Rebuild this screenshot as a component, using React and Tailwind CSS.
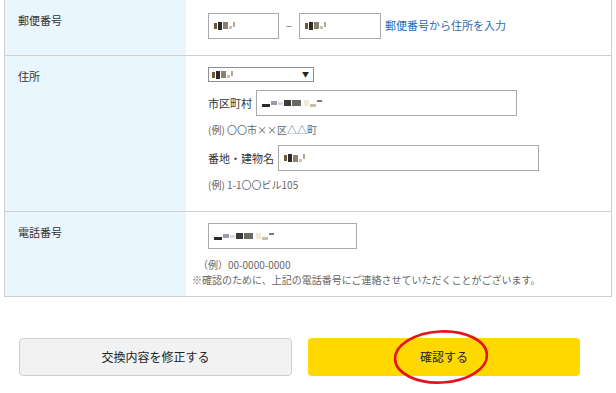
import React from "react";

const FONT = { fontFamily: '"Noto Sans CJK JP", "Noto Sans", sans-serif' };

function Mosaic({ blocks }) {
  return (
    <span className="flex items-center gap-[1px] blur-[0.4px]">
      {blocks.map((b, i) => (
        <span key={i} className={b} />
      ))}
    </span>
  );
}

const SHORT = [
  "h-[6px] w-[3px] bg-[#6b5a3a]",
  "h-[8px] w-[4px] bg-[#2f2a24]",
  "h-[7px] w-[5px] bg-[#8a8070]",
  "h-[3px] w-[3px] bg-[#c8c0b0] mt-[4px]",
  "h-[5px] w-[2px] bg-[#b0a890] mb-[3px]",
];

const LONG = [
  "h-[3px] w-[8px] bg-[#2a2a2a] mt-[5px]",
  "h-[4px] w-[6px] bg-[#9a9aa8]",
  "h-[3px] w-[5px] bg-[#d8d8ea]",
  "h-[6px] w-[7px] bg-[#3a3a3a]",
  "h-[6px] w-[9px] bg-[#6a6a60]",
  "h-[6px] w-[5px] bg-[#f0ead8] ml-[2px]",
  "h-[3px] w-[6px] bg-[#c8c0a8] mt-[4px]",
  "h-[2px] w-[5px] bg-[#7a7a7a] mb-[5px]",
];

function Field({ className, blocks }) {
  return (
    <div className={`flex items-center border border-[#a9a9a9] bg-white px-[5px] ${className}`}>
      <Mosaic blocks={blocks} />
    </div>
  );
}

export default function App() {
  return (
    <div className="h-[393px] w-[616px] bg-white text-[#333]" style={FONT}>
      <div className="mx-[4px] w-[608px] border-x border-[#cfcfcf]">
        {/* 郵便番号 */}
        <div className="grid grid-cols-[181px_1fr] border-b border-[#cfcfcf]">
          <div className="bg-[#eaf6fe] px-[13px] pt-[12px] text-[11px] leading-[16px]">郵便番号</div>
          <div className="flex h-[55px] items-center pb-[4px] pl-[22px] text-[11px]">
            <Field className="h-[26px] w-[71px]" blocks={SHORT} />
            <span className="mx-[7px] text-[#666]">–</span>
            <Field className="h-[26px] w-[82px]" blocks={SHORT} />
            <a className="ml-[4px] text-[11px] text-[#2a6bb5]">郵便番号から住所を入力</a>
          </div>
        </div>

        {/* 住所 */}
        <div className="grid grid-cols-[181px_1fr] border-b border-[#cfcfcf]">
          <div className="bg-[#eaf6fe] px-[13px] pt-[12px] text-[11px] leading-[16px]">住所</div>
          <div className="flex h-[155px] flex-col pl-[22px] pt-[11px] text-[11px]">
            <div className="flex h-[15px] w-[106px] items-center justify-between border border-[#8f8f8f] pl-[3px] pr-[4px]">
              <Mosaic blocks={SHORT} />
              <span className="text-[7px] leading-none text-[#222]">▼</span>
            </div>
            <div className="mt-[8px] flex items-center gap-[4px]">
              <span>市区町村</span>
              <Field className="h-[26px] w-[261px]" blocks={LONG} />
            </div>
            <div className="mt-[7px] text-[10px] leading-[14px] text-[#666]">(例) 〇〇市××区△△町</div>
            <div className="mt-[8px] flex items-center gap-[4px]">
              <span>番地・建物名</span>
              <Field className="h-[26px] w-[261px]" blocks={SHORT} />
            </div>
            <div className="mt-[7px] text-[10px] leading-[14px] text-[#666]">(例) 1-1〇〇ビル105</div>
          </div>
        </div>

        {/* 電話番号 */}
        <div className="grid grid-cols-[181px_1fr] border-b border-[#cfcfcf]">
          <div className="bg-[#eaf6fe] px-[13px] pt-[12px] text-[11px] leading-[16px]">電話番号</div>
          <div className="flex h-[84px] flex-col pl-[6px] pt-[11px]">
            <Field className="ml-[16px] h-[26px] w-[149px]" blocks={LONG} />
            <div className="mt-[8px] pl-[6px] text-[10px] leading-[15px] text-[#666]">（例）00-0000-0000</div>
            <div className="text-[10px] leading-[15px] text-[#666]">
              ※確認のために、上記の電話番号にご連絡させていただくことがございます。
            </div>
          </div>
        </div>
      </div>

      <div className="mt-[41px] flex gap-[16px] pl-[19px]">
        <button className="h-[38px] w-[273px] rounded-[4px] border border-[#cfcfcf] bg-[#f2f2f2] text-[12px] text-[#222]">
          交換内容を修正する
        </button>
        <div className="relative">
          <button className="h-[38px] w-[272px] rounded-[4px] bg-[#ffd800] text-[12px] text-[#222]">
            確認する
          </button>
          <svg className="pointer-events-none absolute left-[83px] top-[-10px]" width="100" height="58" viewBox="0 0 100 58">
            <ellipse cx="50" cy="29" rx="46" ry="25.5" fill="none" stroke="#e3141c" strokeWidth="2.6" transform="rotate(-3 50 29)" />
          </svg>
        </div>
      </div>
    </div>
  );
}
